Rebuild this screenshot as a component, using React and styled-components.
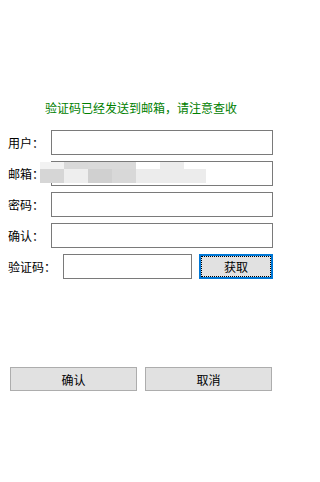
import React from "react";
import styled, { createGlobalStyle } from "styled-components";

const Global = createGlobalStyle`
  html, body { margin: 0; padding: 0; background: #ffffff; }
  body { font-family: "Microsoft YaHei", "Noto Sans CJK SC", "Noto Sans", sans-serif; font-size: 12px; color: #000; }
`;

const Page = styled.div`
  width: 282px;
  height: 482px;
  box-sizing: border-box;
  padding: 99px 9px 0 8px;
  display: flex;
  flex-direction: column;
`;

const Notice = styled.div`
  color: #008000;
  font-size: 12px;
  line-height: 17px;
  height: 17px;
  text-align: center;
  margin: 0 -9px 14px -8px;
`;

const Rows = styled.div`
  display: flex;
  flex-direction: column;
  gap: 6px;
`;

const Row = styled.div`
  position: relative;
  display: grid;
  grid-template-columns: ${(p) => (p.$code ? "55px 129px 1fr" : "43px 1fr")};
  align-items: center;
  height: 25px;
`;

const Label = styled.label`
  font-size: 12px;
  line-height: 17px;
  white-space: nowrap;
`;

const Field = styled.input`
  box-sizing: border-box;
  height: 25px;
  width: 100%;
  margin: 0;
  border: 1px solid #7a7a7a;
  background: #fff;
  outline: none;
  padding: 0 3px;
  font: inherit;
`;

const GetButton = styled.button`
  justify-self: end;
  box-sizing: border-box;
  height: 25px;
  width: 74px;
  margin: 0;
  border: 1px solid #0078d7;
  box-shadow: inset 0 0 0 1px #0078d7;
  outline: 1px dotted #000;
  outline-offset: -3px;
  background: #e1e1e1;
  font: inherit;
  font-size: 12px;
  color: #000;
  padding: 0;
`;

const Mosaic = styled.div`
  position: absolute;
  left: 32px;
  top: 1px;
  width: 166px;
  height: 21px;
  display: grid;
  grid-template-columns: repeat(6, 24px) 22px;
  grid-template-rows: 7px 14px;
  pointer-events: none;
`;

const Tile = styled.div`
  background: ${(p) => p.$c};
`;

const Actions = styled.div`
  margin-top: 88px;
  display: grid;
  grid-template-columns: 127px 127px;
  column-gap: 8px;
  padding-left: 2px;
`;

const ActionButton = styled.button`
  box-sizing: border-box;
  height: 24px;
  margin: 0;
  border: 1px solid #adadad;
  background: #e1e1e1;
  font: inherit;
  font-size: 12px;
  color: #000;
  padding: 0;
`;

const tiles = [
  "#f2f2f2", "#d9d9d9", "#dadada", "#dadada", "#ffffff", "#ececec", "#ffffff",
  "#d6d6d6", "#eeeeee", "#d0d0d0", "#d8d8d8", "#ececec", "#ececec", "#ececec",
];

export default function App() {
  return (
    <>
      <Global />
      <Page>
        <Notice>验证码已经发送到邮箱，请注意查收</Notice>
        <Rows>
          <Row>
            <Label>用户：</Label>
            <Field />
          </Row>
          <Row>
            <Label>邮箱：</Label>
            <Field />
            <Mosaic>
              {tiles.map((c, i) => (
                <Tile key={i} $c={c} />
              ))}
            </Mosaic>
          </Row>
          <Row>
            <Label>密码：</Label>
            <Field type="password" />
          </Row>
          <Row>
            <Label>确认：</Label>
            <Field type="password" />
          </Row>
          <Row $code>
            <Label>验证码：</Label>
            <Field />
            <GetButton>获取</GetButton>
          </Row>
        </Rows>
        <Actions>
          <ActionButton>确认</ActionButton>
          <ActionButton>取消</ActionButton>
        </Actions>
      </Page>
    </>
  );
}
